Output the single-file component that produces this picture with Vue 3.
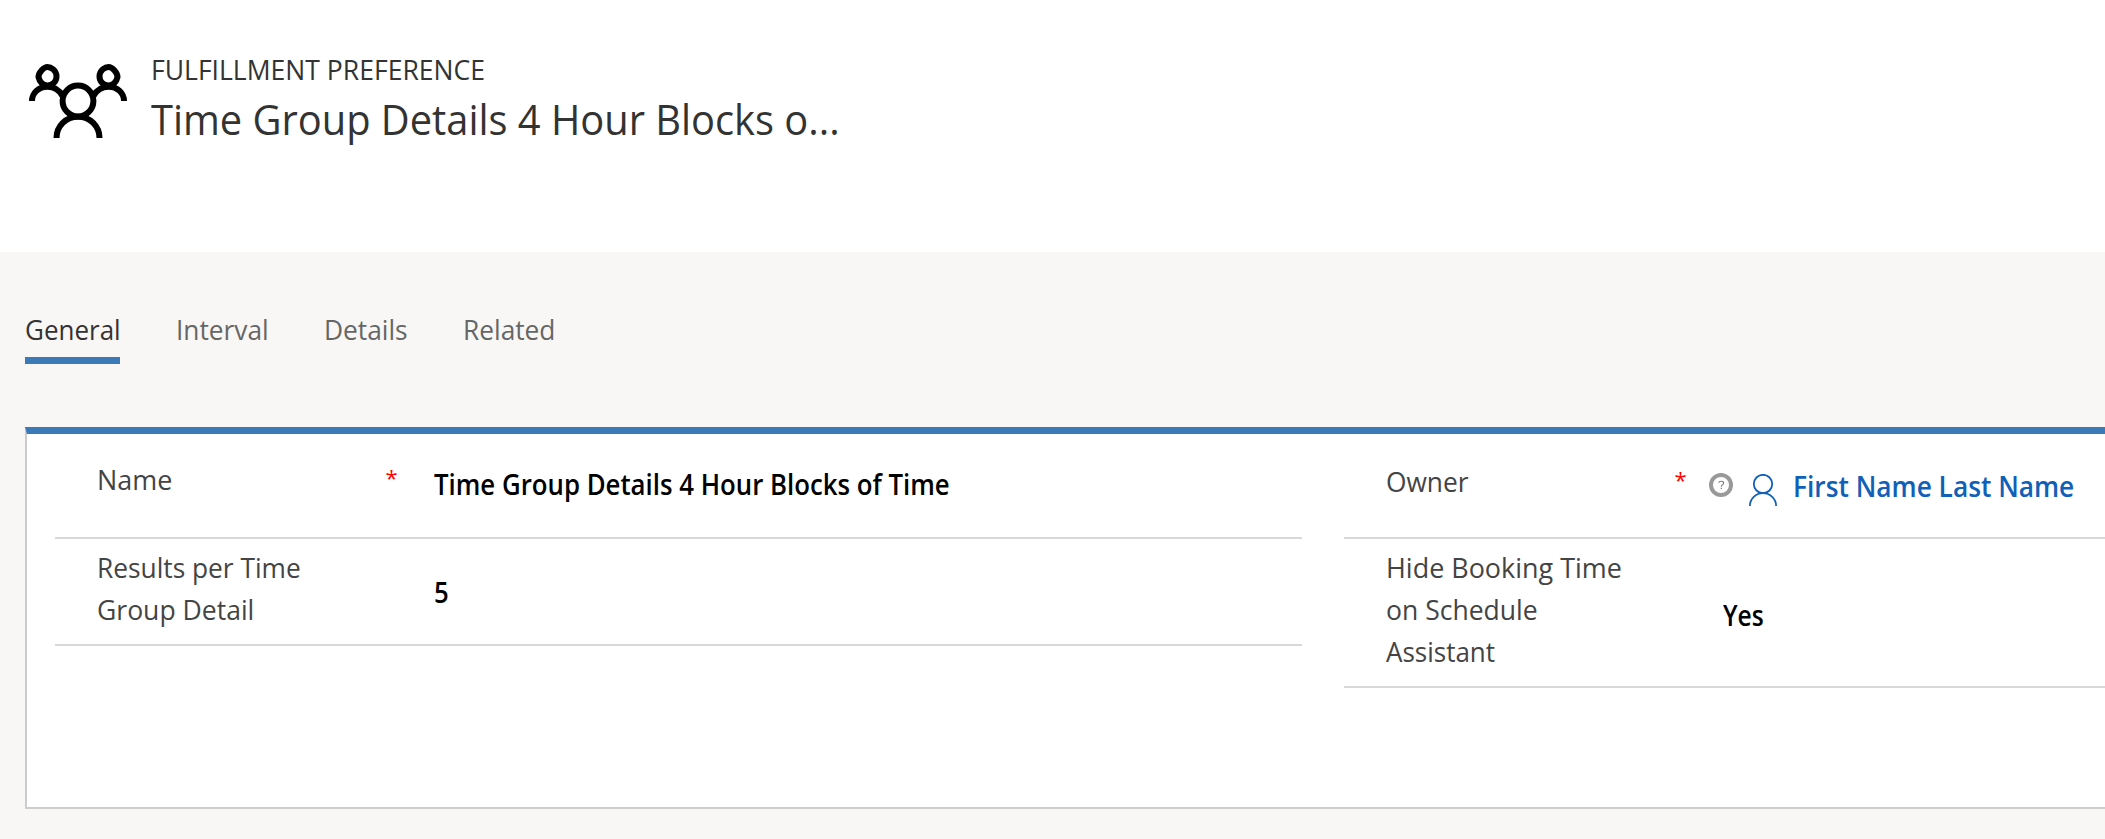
<script setup>
const tabs = [
  { label: 'General', key: 'general', fit: 'w93' },
  { label: 'Interval', key: 'interval', fit: 'w94' },
  { label: 'Details', key: 'details', fit: 'w94' },
  { label: 'Related', key: 'related', fit: 'w94' },
]
</script>

<template>
  <div class="page">
    <header class="head">
      <svg class="group-icon" width="99" height="75" viewBox="0 0 99 75" fill="none" stroke="#000" stroke-width="6">
        <circle cx="49" cy="38" r="15.400" />
        <path d="M27.500 75C27.500 63 37 53.700 49 53.700S70.500 63 70.500 75" />
        <path d="M18.500 4C21.500 4 27.500 7 27.500 13.500C27.500 18.500 23.500 22.500 18.500 22.500S10.500 18.500 9.500 14C9.500 10 14.500 4 18.500 4Z" />
        <path d="M79.500 4C76.500 4 70.500 7 70.500 13.500C70.500 18.500 74.500 22.500 79.500 22.500S87.500 18.500 88.500 14C88.500 10 83.500 4 79.500 4Z" />
        <path d="M3 38C3 30 9.500 23.700 18.500 23.700C25.500 23.700 30.500 27 33.500 33" />
        <path d="M95 38C95 30 88.500 23.700 79.500 23.700C72.500 23.700 67.500 27 64.500 33" />
      </svg>
      <div class="titles">
        <div class="entity"><span class="fit w95">FULFILLMENT PREFERENCE</span></div>
        <h1 class="title"><span class="fit w95">Time Group Details 4 Hour Blocks o...</span></h1>
      </div>
    </header>

    <nav class="tabs">
      <div v-for="(t, i) in tabs" :key="t.key" class="tab" :class="[t.key, { active: i === 0 }]"><span class="fit" :class="t.fit">{{ t.label }}</span></div>
    </nav>

    <section class="panel">
      <div class="col">
        <div class="row first">
          <div class="label name"><span class="fit w96">Name</span></div>
          <span class="req">*</span>
          <div class="value record"><span class="fit w92">Time Group Details 4 Hour Blocks of Time</span></div>
        </div>
        <div class="row second">
          <div class="label"><span class="fit w94">Results per Time</span><br><span class="fit w95">Group Detail</span></div>
          <span class="req"></span>
          <div class="value count"><span class="fit w92">5</span></div>
        </div>
      </div>
      <div class="col">
        <div class="row first">
          <div class="label owner"><span class="fit w94">Owner</span></div>
          <span class="req owner-req">*</span>
          <svg class="help" width="24" height="24" viewBox="0 0 24 24" fill="none">
            <circle cx="12" cy="12" r="10" stroke="#999" stroke-width="4" />
            <path d="M9.700 9.700Q9.900 8.300 12.200 8.300Q14.600 8.300 14.600 10.100Q14.600 11.100 13.400 11.900Q12.300 12.600 12.300 13.700M12.300 14.800V16" stroke="#777" stroke-width="1.100" />
          </svg>
          <svg class="person" width="28" height="32" viewBox="0 0 28 32" fill="none" stroke="#1160b7" stroke-width="1.800">
            <circle cx="14" cy="10" r="9.200" />
            <path d="M.9 32C.9 24.700 6.800 19.200 14 19.200S27.100 24.700 27.100 32" />
          </svg>
          <a class="value person-name"><span class="fit w94">First Name Last Name</span></a>
        </div>
        <div class="row third">
          <div class="label"><span class="fit w96">Hide Booking Time</span><br><span class="fit w95">on Schedule</span><br><span class="fit w93">Assistant</span></div>
          <span class="req"></span>
          <div class="value yes"><span class="fit w88">Yes</span></div>
        </div>
      </div>
    </section>
  </div>
</template>

<style>
body { margin: 0; background: #f8f7f5; }
</style>

<style scoped>
.page {
  width: 2105px;
  height: 839px;
  overflow: hidden;
  box-sizing: border-box;
  background: #f8f7f5;
  font-family: "Open Sans", "Noto Sans", sans-serif;
  font-size: 28px;
  line-height: 42px;
  color: #444;
  white-space: nowrap;
}
.fit { display: inline-block; transform-origin: 0 50%; }
.w88 { transform: scaleX(0.88); }
.w92 { transform: scaleX(0.921); }
.w93 { transform: scaleX(0.928); }
.w94 { transform: scaleX(0.939); }
.w95 { transform: scaleX(0.948); }
.w96 { transform: scaleX(0.962); }

.head {
  display: flex;
  height: 252px;
  background: #fff;
  color: #333;
}
.group-icon { margin: 63px 0 0 29px; flex: none; }
.titles { padding: 48px 0 0 23px; }
.title {
  margin: 1px 0 0;
  font-size: 42px;
  line-height: 56px;
  font-weight: 400;
}

.tabs {
  display: flex;
  gap: 55px;
  padding: 56px 0 0 25px;
  color: #666;
}
.tab { height: 56px; box-sizing: border-box; }
.active { color: #333; border-bottom: 7px solid #3b79b7; }
.general { width: 95px; }
.interval { width: 93px; padding-left: 1px; }
.details { width: 84px; padding-left: 1px; }
.related { padding-left: 1px; }

.panel {
  display: flex;
  gap: 42px;
  box-sizing: border-box;
  height: 382px;
  margin: 63px 0 0 25px;
  padding-left: 28px;
  border: 2px solid #ccc;
  border-top: 7px solid #3b79b7;
  border-right: 0;
  background: #fff;
}
.col { width: 1247px; flex: none; }
.row {
  display: flex;
  align-items: flex-start;
  box-sizing: border-box;
  padding-left: 42px;
  border-bottom: 2px solid #d8d8d8;
}
.first { height: 105px; }
.second { height: 107px; padding-top: 7px; }
.third { height: 149px; padding-top: 7px; }
.label { width: 288.5px; flex: none; }
.name { padding-top: 24px; }
.owner { padding-top: 26px; }
.req {
  width: 48px;
  flex: none;
  padding-top: 25px;
  font-size: 22px;
  line-height: 36px;
  color: #f00;
}
.owner-req { width: 34.5px; padding-top: 27px; }
.value { font-weight: 600; color: #000; }
.record { padding-top: 29px; }
.count { padding-top: 25px; }
.yes { padding-top: 48px; }
.help { margin: 39px 16px 0 0; flex: none; }
.person { margin: 40px 16px 0 0; flex: none; }
.person-name { padding-top: 31px; color: #1160b7; }
</style>
